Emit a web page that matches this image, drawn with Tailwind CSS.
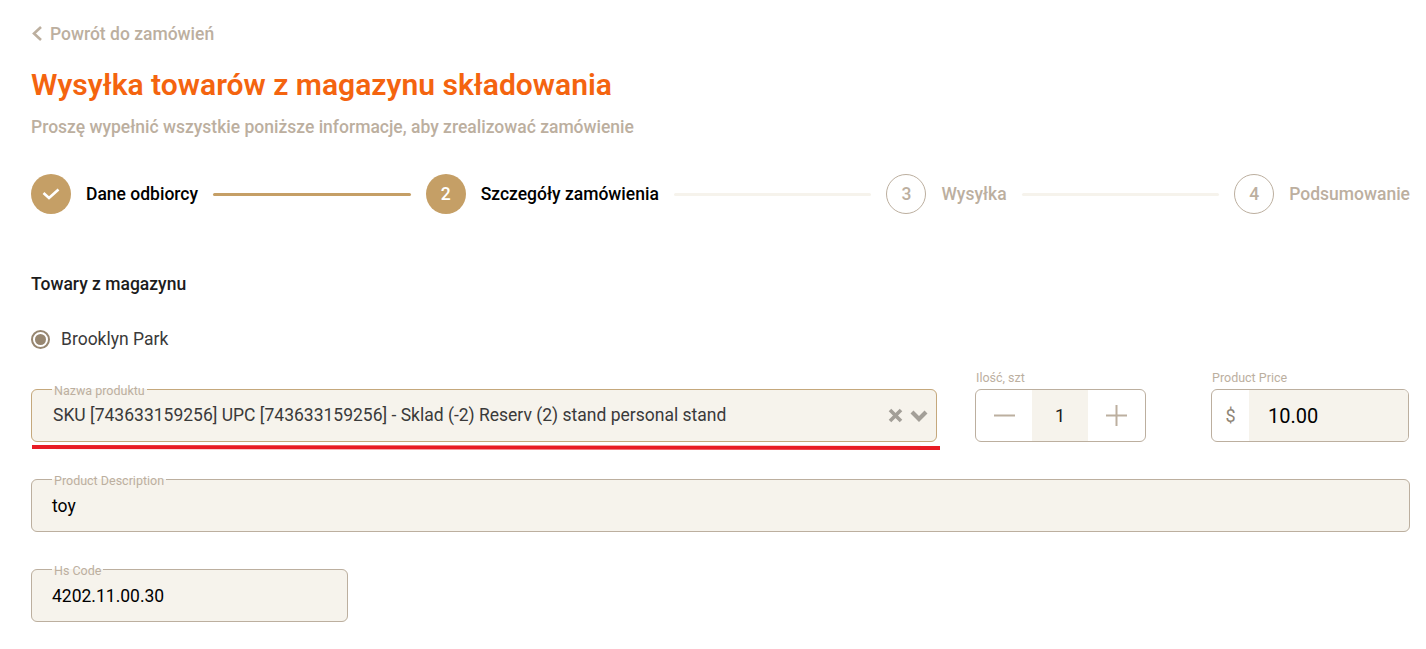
<!DOCTYPE html>
<html lang="pl">

<head>
    <meta charset="UTF-8">
    <meta name="viewport" content="width=device-width, initial-scale=1.0">
    <script src="https://cdn.jsdelivr.net/npm/@tailwindcss/browser@4"></script>
    <title>Wysyłka towarów z magazynu składowania</title>
</head>

<body class="bg-white font-['Roboto',sans-serif] h-[649px] overflow-hidden">
    <div class="relative pl-[31px] pr-[16px]">
        <!-- Back link -->
        <a href="#" class="flex items-center gap-[7px] pt-[23px] h-[44px] text-[#bcaf9f] text-[17.5px] font-medium leading-[20px]">
            <svg width="12" height="17" viewBox="0 0 12 17" fill="none" stroke="#bcaf9f" stroke-width="2.6">
                <path d="M10 2 L3 8.5 L10 15" />
            </svg>
            Powrót do zamówień
        </a>

        <!-- Title -->
        <h1 class="mt-[21px] text-[#f4640f] text-[30.05px] font-semibold leading-[40px]">Wysyłka towarów z magazynu składowania</h1>
        <p class="mt-[12px] text-[#bcaf9f] text-[17.5px] font-medium leading-[20px]">Proszę wypełnić wszystkie poniższe informacje, aby zrealizować zamówienie</p>

        <!-- Stepper -->
        <div class="mt-[37px] flex items-center gap-[15px] w-[1379px] h-[40px] text-[17.5px] font-medium">
            <div class="w-[40px] h-[40px] rounded-full bg-[#c59f66] flex items-center justify-center shrink-0">
                <svg width="18" height="14" viewBox="0 0 18 14" fill="none" stroke="#ffffff" stroke-width="2.6">
                    <path d="M1.5 6 L7 11 L16.5 2.5" />
                </svg>
            </div>
            <span class="text-black whitespace-nowrap">Dane odbiorcy</span>
            <div class="flex-1 h-[3px] rounded-full bg-[#c59f66]"></div>
            <div class="w-[40px] h-[40px] rounded-full bg-[#c59f66] text-white flex items-center justify-center shrink-0">2</div>
            <span class="text-black whitespace-nowrap">Szczegóły zamówienia</span>
            <div class="flex-1 h-[3px] rounded-full bg-[#f6f3ec]"></div>
            <div class="w-[40px] h-[40px] rounded-full border border-[#bcaf9f] text-[#bcaf9f] flex items-center justify-center shrink-0">3</div>
            <span class="text-[#bcaf9f] whitespace-nowrap">Wysyłka</span>
            <div class="flex-1 h-[3px] rounded-full bg-[#f6f3ec]"></div>
            <div class="w-[40px] h-[40px] rounded-full border border-[#bcaf9f] text-[#bcaf9f] flex items-center justify-center shrink-0">4</div>
            <span class="text-[#bcaf9f] whitespace-nowrap">Podsumowanie</span>
        </div>

        <!-- Section -->
        <h2 class="mt-[60px] text-[#1c1c1c] text-[17.5px] font-medium leading-[20px]">Towary z magazynu</h2>

        <label class="mt-[35px] flex items-center gap-[11px] h-[20px] text-[#3a3a3a] text-[17.5px]">
            <span class="w-[19px] h-[19px] rounded-full border-2 border-[#978670] flex items-center justify-center">
                <span class="w-[11px] h-[11px] rounded-full bg-[#978670]"></span>
            </span>
            Brooklyn Park
        </label>

        <!-- Product row -->
        <div class="mt-[33px] flex items-start h-[60px]">
            <fieldset class="relative w-[906px] h-[60px] border border-[#c5a87c] rounded-[6px] bg-[#f6f3ec] pl-[21px] pr-[8px]">
                <legend class="ml-[-1px] px-[2px] h-[14px] text-[12.5px] leading-[18px] text-[#bcaf9f]">Nazwa produktu</legend>
                <div class="flex items-center justify-between h-[38px] pt-[1px]">
                    <span class="text-[#3a3a3a] text-[17.5px]">SKU [743633159256] UPC [743633159256] - Sklad (-2) Reserv (2) stand personal stand</span>
                    <span class="flex items-center gap-[7px]">
                        <svg width="15" height="15" viewBox="0 0 15 15" fill="none" stroke="#a39f98" stroke-width="3.6">
                            <path d="M2 2 L13 13 M13 2 L2 13" />
                        </svg>
                        <svg width="18" height="12" viewBox="0 0 18 12" fill="none" stroke="#a39f98" stroke-width="4.2">
                            <path d="M2 2 L9 9 L16 2" />
                        </svg>
                    </span>
                </div>
            </fieldset>

            <div class="ml-[38px] w-[171px]">
                <div class="h-[11px] text-[12.5px] leading-[0px] mt-[-4px] text-[#bcaf9f] whitespace-nowrap pl-[1px]">Ilość, szt</div>
                <div class="flex h-[53px] border border-[#bcaf9f] rounded-[6px] overflow-hidden">
                    <div class="w-[56px] flex items-center justify-center">
                        <svg width="21" height="3" viewBox="0 0 21 3"><rect width="21" height="2" y="0.5" fill="#bcaf9f" /></svg>
                    </div>
                    <div class="w-[56px] bg-[#f6f3ec] flex items-center justify-center text-[18px] text-[#1c1c1c]">1</div>
                    <div class="flex-1 flex items-center justify-center">
                        <svg width="21" height="21" viewBox="0 0 21 21"><path d="M0 9.5h21v2H0zM9.5 0h2v21h-2z" fill="#bcaf9f" /></svg>
                    </div>
                </div>
            </div>

            <div class="ml-[65px] w-[198px]">
                <div class="h-[11px] text-[12.5px] leading-[0px] mt-[-4px] text-[#bcaf9f] whitespace-nowrap pl-[1px]">Product Price</div>
                <div class="flex h-[53px] border border-[#bcaf9f] rounded-[6px] overflow-hidden">
                    <div class="w-[37px] flex items-center justify-center text-[#8f8576] text-[18px]">$</div>
                    <div class="flex-1 bg-[#f6f3ec] flex items-center pl-[19px] text-[20px] text-black">10.00</div>
                </div>
            </div>
        </div>

        <!-- Annotation line, drawn by hand over the page so it slopes a little -->
        <svg class="absolute left-[32px] top-[444px]" width="908" height="6" viewBox="0 0 908 6">
            <polygon points="0,1 908,2 908,6 0,5" fill="#e81c24" />
        </svg>

        <!-- Description -->
        <fieldset class="mt-[30px] w-[1379px] h-[60px] border border-[#bcaf9f] rounded-[6px] bg-[#f6f3ec] pl-[20px]">
            <legend class="px-[2px] h-[14px] text-[12.5px] leading-[18px] text-[#bcaf9f]">Product Description</legend>
            <div class="h-[38px] pt-[2px] flex items-center text-[17.5px] text-black">toy</div>
        </fieldset>

        <!-- Hs code -->
        <fieldset class="mt-[30px] w-[317px] h-[60px] border border-[#bcaf9f] rounded-[6px] bg-[#f6f3ec] pl-[20px]">
            <legend class="px-[2px] h-[14px] text-[12.5px] leading-[18px] text-[#bcaf9f]">Hs Code</legend>
            <div class="h-[38px] pt-[2px] flex items-center text-[17.5px] text-black">4202.11.00.30</div>
        </fieldset>
    </div>
</body>

</html>
